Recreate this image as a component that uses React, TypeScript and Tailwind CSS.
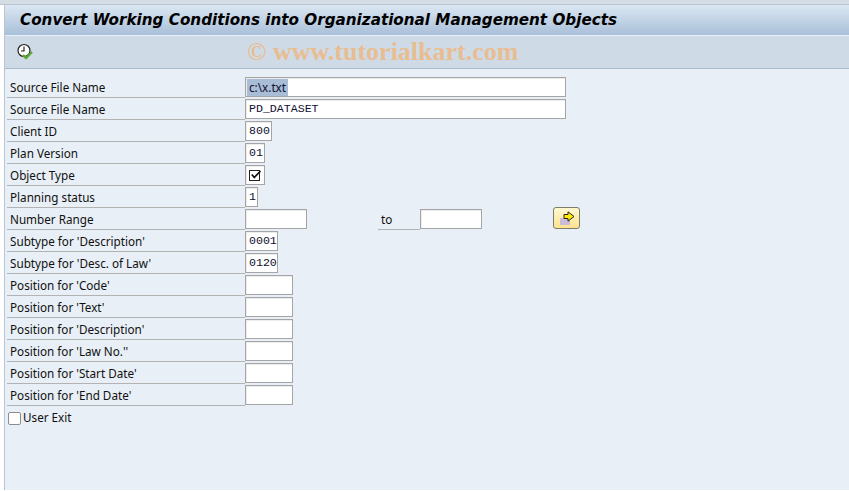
const rows: { label: string; value?: string; width: string; mono?: boolean; selected?: boolean; check?: boolean }[] = [
  { label: "Source File Name", value: "c:\\x.txt", width: "w-[321px]", selected: true },
  { label: "Source File Name", value: "PD_DATASET", width: "w-[321px]", mono: true },
  { label: "Client ID", value: "800", width: "w-[27px]", mono: true },
  { label: "Plan Version", value: "01", width: "w-[20px]", mono: true },
  { label: "Object Type", width: "w-[20px]", check: true },
  { label: "Planning status", value: "1", width: "w-[13px]", mono: true },
  { label: "Number Range", width: "w-[62px]" },
  { label: "Subtype for 'Description'", value: "0001", width: "w-[33px]", mono: true },
  { label: "Subtype for 'Desc. of Law'", value: "0120", width: "w-[33px]", mono: true },
  { label: "Position for 'Code'", width: "w-[48px]" },
  { label: "Position for 'Text'", width: "w-[48px]" },
  { label: "Position for 'Description'", width: "w-[48px]" },
  { label: "Position for 'Law No.''", width: "w-[48px]" },
  { label: "Position for 'Start Date'", width: "w-[48px]" },
  { label: "Position for 'End Date'", width: "w-[48px]" },
];

function Field({ width, value, mono, selected, check }: { width: string; value?: string; mono?: boolean; selected?: boolean; check?: boolean }) {
  return (
    <div className={`${width} h-[20px] shrink-0 border border-[#a5a5a5] bg-white shadow-[inset_1px_1px_0_#ececec] flex items-center overflow-hidden whitespace-nowrap ${selected ? "pl-[1px]" : "pl-[3px]"}`}>
      {check ? (
        <svg width="13" height="13" viewBox="0 0 13 13">
          <rect x="0.5" y="1.5" width="10" height="10" fill="#fff" stroke="#222" />
          <path d="M2.8 5.5 L5.3 8.5 L11.5 2" fill="none" stroke="#111" strokeWidth="1.7" />
        </svg>
      ) : selected ? (
        <span className="bg-[#a9bdd6] text-[#101030] leading-[17px] px-[2px]">{value}</span>
      ) : (
        <span className={mono ? "font-['Liberation_Mono',monospace] text-[11.6px] text-[#101030]" : ""}>{value}</span>
      )}
    </div>
  );
}

export default function App() {
  return (
    <div className="w-[849px] h-[491px] bg-white overflow-hidden font-['Noto_Sans',sans-serif] text-[11.7px] [font-variant-ligatures:none] text-[#111]">
      <div className="h-[5px] bg-[#d4dce4] border-b border-[#b9c5d2]" />
      <div className="ml-[4px] h-[485px] border-l border-[#b9c5d2] bg-[#e8eff6] flex flex-col">
        <div className="h-[31px] bg-gradient-to-b from-[#dbe7f2] to-[#a9c0d9] border-b border-[#e8f0f7] flex items-center pl-[15px]">
          <h1 className="font-['DejaVu_Sans',sans-serif] font-bold italic text-[15.2px] text-black whitespace-nowrap">
            Convert Working Conditions into Organizational Management Objects
          </h1>
        </div>
        <div className="h-[33px] bg-[#cedbe7] border-b border-[#a9b9ca] flex items-center relative pl-[11px]">
          <svg width="18" height="18" viewBox="0 0 18 18">
            <circle cx="8" cy="7.5" r="6" fill="#fff" stroke="#222" strokeWidth="1.2" />
            <path d="M8 3.5 V8 H5" fill="none" stroke="#222" strokeWidth="1.2" />
            <path d="M7 12 L10 15 L16 9" fill="none" stroke="#5aa832" strokeWidth="2.4" />
          </svg>
          <span className="ml-[213px] mt-[-1px] font-['Liberation_Serif',serif] font-bold text-[26px] text-[#e9bd92] whitespace-nowrap">
            © www.tutorialkart.com
          </span>
        </div>
        <div className="pt-[8px] pl-[2px] flex flex-col">
          {rows.map((r) => (
            <div key={r.label + r.value} className="h-[22px] flex items-start">
              <div className="w-[238px] h-[21px] shrink-0 border-b border-[#b3b3b3] pl-[3px] leading-[20px] whitespace-nowrap">{r.label}</div>
              <Field width={r.width} value={r.value} mono={r.mono} selected={r.selected} check={r.check} />
              {r.label === "Number Range" && (
                <>
                  <div className="ml-[71px] w-[42px] h-[21px] shrink-0 border-b border-[#b3b3b3] pl-[3px] leading-[20px]">to</div>
                  <Field width="w-[62px]" />
                  <button className="ml-[71px] mt-[-2px] w-[27px] h-[22px] rounded-[3px] border border-[#7d7d6a] bg-gradient-to-b from-[#fff8d0] to-[#fde38f] flex items-center justify-center">
                    <svg width="16" height="15" viewBox="0 0 16 15">
                      <rect x="1" y="7" width="10" height="7" fill="#cdbcd6" />
                      <path d="M5 3.5 H9 V0.8 L15 5.5 L9 10.2 V7.5 H5 Z" fill="#ffee00" stroke="#222" strokeWidth="1" />
                    </svg>
                  </button>
                </>
              )}
            </div>
          ))}
          <div className="mt-[2px] flex items-center h-[18px] pl-[1px]">
            <div className="w-[13px] h-[13px] rounded-[2px] border border-[#8c8c8c] bg-white" />
            <span className="ml-[2px]">User Exit</span>
          </div>
        </div>
      </div>
    </div>
  );
}
